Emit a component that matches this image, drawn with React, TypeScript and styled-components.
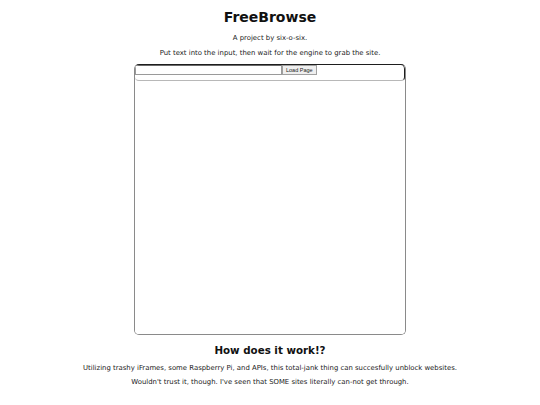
import React from 'react';
import styled, { createGlobalStyle } from 'styled-components';

const GlobalStyle = createGlobalStyle`
  html, body {
    margin: 0;
    padding: 0;
    background: #ffffff;
  }

  body {
    font-family: "DejaVu Sans", Verdana, sans-serif;
    color: #111111;
  }
`;

const Page = styled.main`
  width: 540px;
  display: flex;
  flex-direction: column;
  align-items: center;
  padding-top: 8px;
`;

const Title = styled.h1`
  margin: 0;
  font-size: 14px;
  line-height: 18px;
  font-weight: bold;
`;

const Heading = styled.h2`
  margin: 9px 0 0;
  font-size: 10.3px;
  line-height: 13px;
  font-weight: bold;
`;

const Note = styled.p<{ $gap: number }>`
  margin: ${(p) => p.$gap}px 0 0;
  font-size: 6.9px;
  line-height: 9px;
  color: #222222;
`;

const Frame = styled.div`
  margin-top: 6px;
  width: 270px;
  height: 269px;
  border: 1px solid #8a8a8a;
  border-top-color: #1e1e1e;
  border-radius: 5px;
  display: flex;
  flex-direction: column;
  overflow: hidden;
`;

const Bar = styled.form`
  height: 16px;
  display: flex;
  align-items: flex-start;
  border-bottom: 1px solid #b8b8b8;
  border-right: 1px solid #1e1e1e;
  border-radius: 0 4px 4px 4px;
  box-sizing: border-box;
`;

const UrlInput = styled.input`
  width: 147px;
  height: 10px;
  margin: 0;
  padding: 0;
  border: 1px solid #9a9a9a;
  border-top-color: #6a6a6a;
  box-sizing: border-box;
  font-family: inherit;
  font-size: 6px;
`;

const LoadButton = styled.button`
  height: 10px;
  margin: 0;
  padding: 0 3px;
  border: 1px solid #a0a0a0;
  background: #efefef;
  font-family: "Liberation Sans", Arial, sans-serif;
  font-size: 5.5px;
  line-height: 8px;
  color: #222222;
`;

const Viewport = styled.div`
  flex: 1;
  background: #ffffff;
`;

const App = () => {
  return (
    <Page>
      <GlobalStyle />
      <Title>FreeBrowse</Title>
      <Note $gap={8}>A project by six-o-six.</Note>
      <Note $gap={6}>Put text into the input, then wait for the engine to grab the site.</Note>
      <Frame>
        <Bar onSubmit={(e) => e.preventDefault()}>
          <UrlInput type="text" />
          <LoadButton type="submit">Load Page</LoadButton>
        </Bar>
        <Viewport />
      </Frame>
      <Heading>How does it work!?</Heading>
      <Note $gap={7}>
        Utilizing trashy iFrames, some Raspberry Pi, and APIs, this total-jank thing can succesfully unblock websites.
      </Note>
      <Note $gap={5}>Wouldn't trust it, though. I've seen that SOME sites literally can-not get through.</Note>
    </Page>
  );
};

export default App;
